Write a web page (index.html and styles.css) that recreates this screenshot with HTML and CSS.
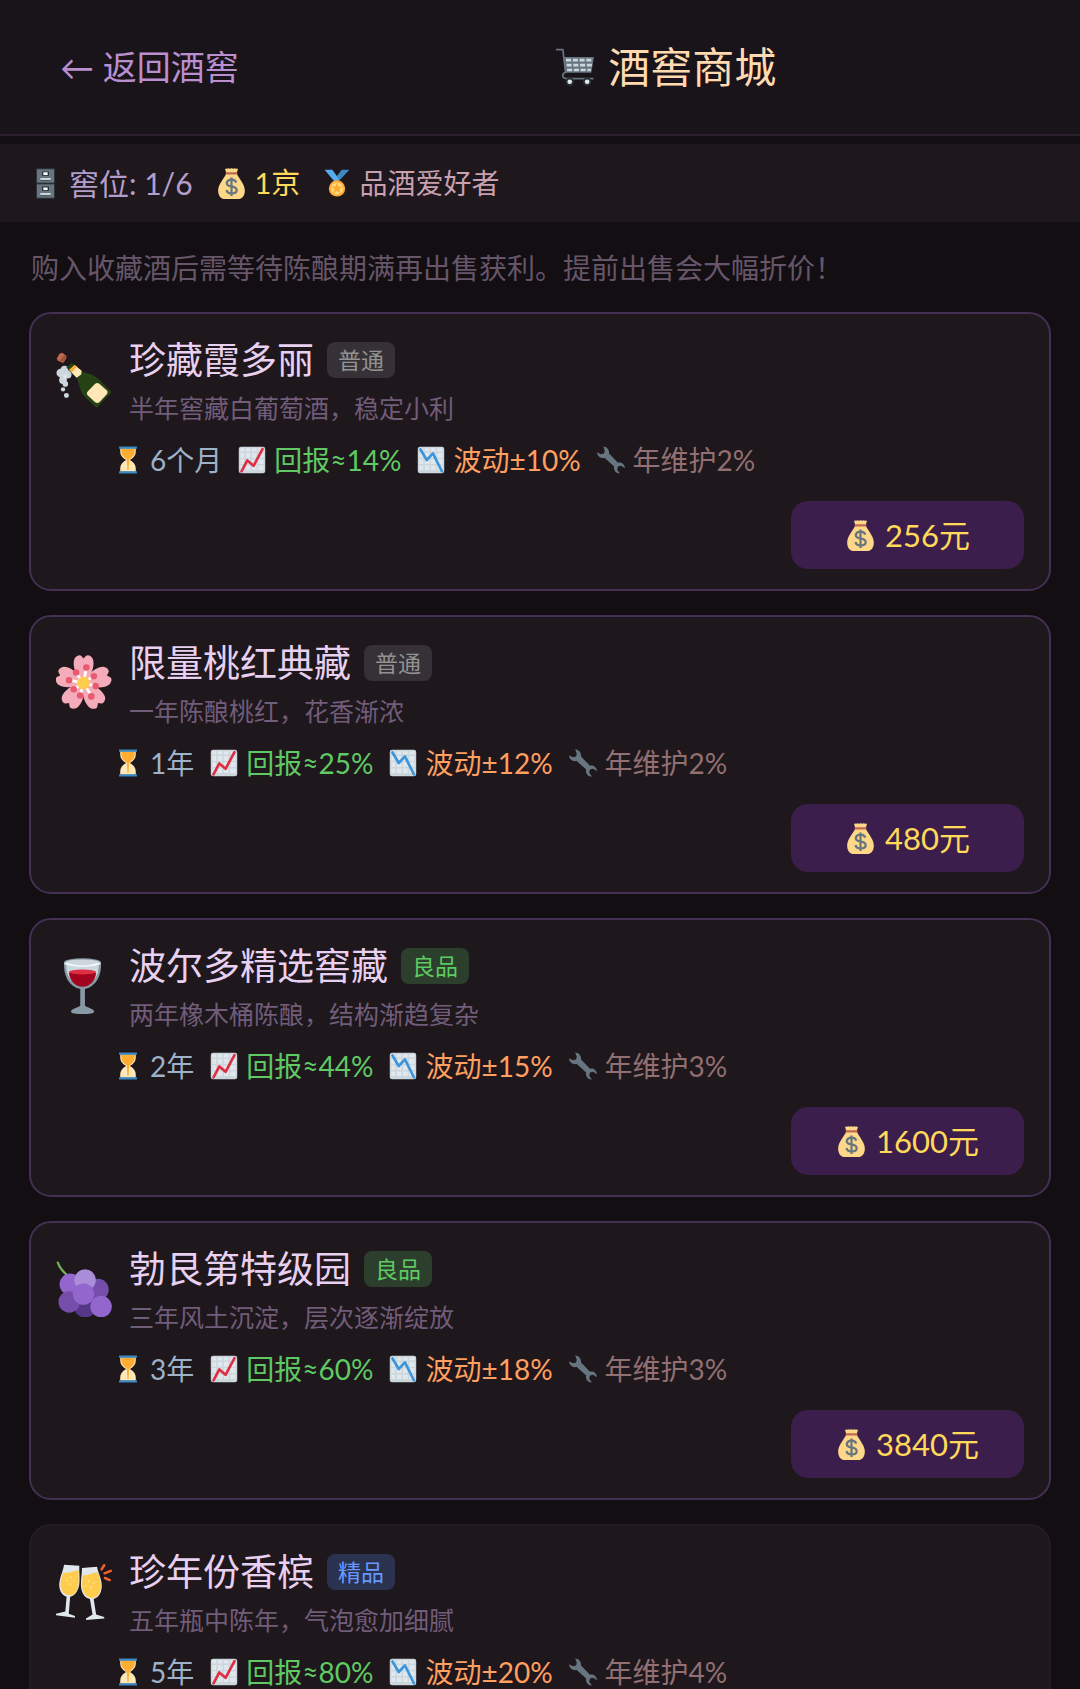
FILE: index.html
```html
<!DOCTYPE html>
<html lang="zh-CN">
  <head>
    <meta charset="UTF-8">
    <meta name="viewport" content="width=device-width, initial-scale=1">
    <title>酒窖商城</title>
    <link rel="stylesheet" href="styles.css">
  </head>
  <body>
    <!-- Shared icons -->
    <svg class="sprite" aria-hidden="true">
      <symbol id="cart" viewBox="0 0 36 36">
        <path d="M0 1.5h6.5L9 23q-4 2-2 5 .7 1 3 1h25.500" fill="none" stroke="#66757f" stroke-width="1.600"/>
        <path d="M7.500 8.500H36L33.500 23.500H9.500z" fill="#66757f"/>
        <path d="M9.500 11.500h25M10 16.200h24M10.500 20.800h22.500" stroke="#ccd6dd" stroke-width="2.500" stroke-dasharray="4.800 1.600"/>
        <circle cx="13" cy="32" r="4" fill="#292f33"/><circle cx="29.500" cy="32" r="4" fill="#292f33"/>
        <circle cx="13" cy="32" r="2.200" fill="#e1e8ed"/><circle cx="29.500" cy="32" r="2.200" fill="#e1e8ed"/>
      </symbol>
      <symbol id="cabinet" viewBox="0 0 36 36">
        <rect x="7" y="0" width="22" height="36" rx="1.500" fill="#292f33"/>
        <rect x="8" y="1.500" width="20" height="15.500" fill="#66757f"/>
        <rect x="8" y="19" width="20" height="15.500" fill="#66757f"/>
        <path d="M14 4h8v5h-8zM14 21.500h8v5h-8z" fill="#292f33"/>
        <path d="M15.500 5h5v3h-5zM15.500 22.500h5v3h-5z" fill="#fff"/>
        <path d="M12 11.500h12v3H12zM12 29h12v3H12z" fill="#ccd6dd"/>
        <path d="M12 14.500h12M12 32h12" stroke="#3b474f"/>
      </symbol>
      <symbol id="bag" viewBox="0 0 36 36">
        <path d="M12 6 10.500 1.200q1-1.200 2.500-.2 1.500-1.500 3 0 2-1.500 4 0 1.500-1.500 3 0 1.500-1 2.500.2L24 6c1.500 5 9.500 12 9.500 20 0 6-3 10-8 10h-15c-5 0-8-4-8-10 0-8 8-15 9.500-20z" fill="#fdd888"/>
        <path d="M11.500 5h13l.5 2.500H11z" fill="#bf6952"/>
        <path d="M23.500 17q-1-3.500-5.500-3.500t-5.500 3.800q0 3.200 5.500 4 6 1 6 4.500 0 3.700-5.800 3.700-5.200 0-6-4M18 11v21.500" fill="none" stroke="#67757f" stroke-width="2.600"/>
      </symbol>
      <symbol id="medal" viewBox="0 0 36 36">
        <path d="M34 1H24L14 14l4 4z" fill="#3b88c3"/>
        <path d="M2 1h10l8.500 12-5 4z" fill="#55acee"/>
        <circle cx="18" cy="25" r="10.500" fill="#ffac33"/>
        <circle cx="18" cy="25" r="7.800" fill="#ffd983"/>
        <path d="m18 17.500 2 5h5.500l-4.300 3.500 1.600 5.500-4.800-3.200-4.800 3.200 1.600-5.500-4.300-3.500H16z" fill="#ffac33"/>
      </symbol>
      <symbol id="hourglass" viewBox="0 0 36 36">
        <path d="M8 3h20v4c0 5-2.500 8-7.500 11 5 3 7.500 6 7.500 11v4H8v-4c0-5 2.500-8 7.500-11C10.500 15 8 12 8 7z" fill="#ffe8b6"/>
        <path d="M9.500 4h17v4c0 4-4 7-7 9.500L18.700 31h-1.400l-.8-13.500c-3-2.500-7-5.500-7-9.500z" fill="#ffac33"/>
        <path d="M6.500.5h23v3h-23zM6.500 32.500h23v3h-23z" fill="#3b88c3"/>
      </symbol>
      <symbol id="grid" viewBox="0 0 36 36">
        <rect x="1" y="1" width="34" height="34" rx="3" fill="#ccd6dd"/>
        <path d="M3 3h5v4H3zM10 3h6v4h-6zM18 3h6v4h-6zM26 3h7v4h-7zM3 9h5v6H3zM10 9h6v6h-6zM18 9h6v6h-6zM26 9h7v6h-7zM3 17h5v6H3zM10 17h6v6h-6zM18 17h6v6h-6zM26 17h7v6h-7zM3 25h5v6H3zM10 25h6v6h-6zM18 25h6v6h-6zM26 25h7v6h-7z" fill="#e1e8ed"/>
      </symbol>
      <symbol id="chart-up" viewBox="0 0 36 36">
        <use href="#grid"/>
        <path d="m4.500 32.500 7.500-14 8 7L31.500 4" fill="none" stroke="#dd2e44" stroke-width="3.400" stroke-linecap="round" stroke-linejoin="round"/>
      </symbol>
      <symbol id="chart-down" viewBox="0 0 36 36">
        <use href="#grid"/>
        <path d="m4.500 4.500 8 13.500 8-8.500 11.500 23" fill="none" stroke="#3a95dc" stroke-width="3.400" stroke-linecap="round" stroke-linejoin="round"/>
      </symbol>
      <symbol id="wrench" viewBox="0 0 36 36">
        <path d="M8 .5c4 0 8 3.500 7.500 9L27 21.500c4-1 8.500 1.500 9 7l-5-3-4 1-1 4 3.500 5c-5.500 0-8.500-4.500-7.500-9L10 15.500C4.500 16.500.5 13 0 8l5 2.500 4-1L10 6z" fill="#66757f"/>
      </symbol>
      <symbol id="champagne" viewBox="0 0 36 36">
        <path d="m.6 4 1.600-2.800L4 .5l2.800 2-.4 2-1.800 2.500L1 5.500z" fill="#c1694f"/>
        <path d="M2.500 5.500 5.500 2l1 1L5 6.500z" fill="#a0503a"/>
        <g fill="#ccd6dd">
          <circle cx="3" cy="13.500" r="2.700"/><circle cx="5.500" cy="11.500" r="2.700"/><circle cx="7.500" cy="14.500" r="2.500"/>
          <circle cx="4.500" cy="18" r="2.500"/><circle cx="6" cy="20.500" r="1.800"/><circle cx="4.500" cy="24" r="1.400"/><circle cx="6.700" cy="28" r="1.600"/>
        </g>
        <path d="M3 13q2 4 4.500 0L6 18z" fill="#e1e8ed"/>
        <path d="m6.700 10 3.500-3 2 1.300-.5 2 5 2.500c7 1 11 4.500 13 7l6 5.900L26.200 36l-7-6.500C15.500 26 15 21 13.500 16.500L9 12.500z" fill="#264316"/>
        <path d="m8.500 11.500 3.500-3.200 4.500 3.700-.3 2.500-3 2z" fill="#ffe8b6"/>
        <path d="m8.500 11.500 3.500-3.200 1.500 1.200-3.300 3.500z" fill="#ffac33"/>
        <path d="M25 20.600q1.500-1.300 3 0l4.500 4q1.300 1.300 0 2.800l-4.500 4.800q-1.500 1.300-3 0L20.500 28q-1.300-1.300 0-2.800z" fill="#ffe8b6"/>
      </symbol>
      <symbol id="flower" viewBox="0 0 36 36">
        <g fill="#f4abba">
          <path id="petal" d="M17.700 18C12 13 10.500 6 11.800 2.500 13 .3 15.500-.5 16.300.7l1.400 1.500L19.200.7c1-1.200 3.400-.4 4.500 1.800C25 6 23.500 13 17.700 18z"/>
          <use href="#petal" transform="rotate(72 17.700 18)"/>
          <use href="#petal" transform="rotate(144 17.700 18)"/>
          <use href="#petal" transform="rotate(216 17.700 18)"/>
          <use href="#petal" transform="rotate(288 17.700 18)"/>
        </g>
        <path d="m17.700 18 1.500-8M17.700 18l-4.500-6M17.700 18l-7.500-1.500M17.700 18l-5.500 3.500M17.700 18l-1.700 6.500M17.700 18l4.300 7M17.700 18l6 1.500M17.700 18l5.500-4" stroke="#fff" stroke-width="1.800"/>
        <g fill="#ea596e">
          <circle cx="19.500" cy="8" r="2.100"/><circle cx="12.900" cy="11.200" r="2.100"/><circle cx="8.400" cy="16.200" r="2.100"/><circle cx="11.400" cy="22" r="2.100"/>
          <circle cx="15.500" cy="26" r="2.100"/><circle cx="22.700" cy="26.600" r="2.100"/><circle cx="25.500" cy="20" r="2.100"/><circle cx="24.300" cy="13.600" r="2.100"/>
        </g>
        <circle cx="17.700" cy="18" r="4.100" fill="#ffcc4d"/>
      </symbol>
      <symbol id="wine" viewBox="0 0 36 36">
        <path d="M5.200 2.500h23.700C29.500 11 26 18 18.600 20v10.500c1 1.300 6 2 6 4 0 1-3.500 1.500-7.500 1.500s-7.500-.5-7.500-1.500c0-2 5-2.700 6-4V20C8 18 4.600 11 5.200 2.500z" fill="#8899a6"/>
        <path d="M6.500 4h21q0 12-10.500 14Q6.500 16 6.500 4z" fill="#ccd6dd"/>
        <path d="M8.300 9.500h17.500c-.5 5-3.800 9-8.700 9s-8.300-4-8.800-9z" fill="#a0041e"/>
        <ellipse cx="17" cy="9" rx="8.700" ry="1.600" fill="#dd2e44"/>
        <ellipse cx="17" cy="2.600" rx="11.900" ry="2.400" fill="#8899a6"/>
        <ellipse cx="17" cy="2.800" rx="10.800" ry="1.900" fill="#ccd6dd"/>
        <path d="M5.500 3.500q11.500 3.500 23 0" fill="none" stroke="#f5f8fa" stroke-width="1.200"/>
      </symbol>
      <symbol id="grapes" viewBox="0 0 36 36">
        <path d="M1 .5Q2 4.500 7 9" fill="none" stroke="#77b255" stroke-width="1.500"/>
        <circle cx="9.200" cy="15" r="6.900" fill="#9266cc"/>
        <circle cx="27" cy="18.300" r="6.900" fill="#744eaa"/>
        <circle cx="18.700" cy="29.500" r="6.900" fill="#553788"/>
        <circle cx="8.500" cy="26.300" r="6.900" fill="#744eaa"/>
        <circle cx="18.700" cy="12.200" r="6.900" fill="#aa8dd8"/>
        <circle cx="17.700" cy="21.300" r="6.900" fill="#9266cc"/>
        <circle cx="29" cy="29.300" r="6.900" fill="#9266cc"/>
      </symbol>
      <symbol id="cheers" viewBox="0 0 36 36">
        <path d="M5.200.5 15 1.200c-.2 3 .3 6 .1 10.500-.2 5-3 9-6 9.300L8.200 32l4 1.500v1L0 33v-1l6-1.500L6.800 21C3.500 20 1.500 16 2.200 11.500 3 7 4.700 4 5.200.5z" fill="#e1e8ed"/>
        <path d="m16.700 2.500 9.700-.7c.5 3.500 2.500 6.500 3 11.200.3 5-1.800 8.500-5.200 9.500l1.600 10 5.200 1.500v1L19.300 36v-1l4.200-2.500-1.700-10c-4-.7-5.800-5-5.800-9.500 0-4 .7-7 .7-10.500z" fill="#e1e8ed"/>
        <path d="M4.500 5.500q5 .5 7-1l3-.5v8c-.2 4.500-2.300 8-5.600 8.100C5 20 2.200 16.500 3 11.500z" fill="#ffcc4d"/>
        <path d="M17.200 7q2.500.5 5-.5t4.500-1.200c1 2.500 2 5 2.100 8 .2 4.500-1.700 8-5.300 8.500-4.500 0-6.700-4-6.700-8.800z" fill="#ffcc4d"/>
        <g fill="#ffe19a"><circle cx="9.500" cy="8.500" r=".7"/><circle cx="7" cy="10.500" r=".6"/><circle cx="11.500" cy="11" r=".6"/><circle cx="9" cy="13" r=".7"/><circle cx="21" cy="11" r=".7"/><circle cx="24.500" cy="12" r=".6"/><circle cx="19" cy="14" r=".6"/><circle cx="22.500" cy="15" r=".7"/></g>
        <path d="M29.300 3.500 31 .8M31.200 6l4-1.600M31.500 9l3 1.300" stroke="#f4622c" stroke-width="1.600" stroke-linecap="round"/>
      </symbol>
    </svg>

    <header class="topbar">
      <button class="back" type="button">← 返回酒窖</button>
      <h1 class="title"><svg class="icon-title"><use href="#cart"/></svg>酒窖商城</h1>
    </header>

    <div class="status">
      <span class="stat slots"><svg class="icon"><use href="#cabinet"/></svg>窖位: 1/6</span>
      <span class="stat money"><svg class="icon"><use href="#bag"/></svg>1京</span>
      <span class="stat rank"><svg class="icon-small"><use href="#medal"/></svg>品酒爱好者</span>
    </div>

    <main class="shop">
      <p class="hint">购入收藏酒后需等待陈酿期满再出售获利。提前出售会大幅折价！</p>

      <article class="card">
        <div class="card-head">
          <svg class="icon-wine"><use href="#champagne"/></svg>
          <div class="info">
            <h2 class="name">珍藏霞多丽 <span class="tag common">普通</span></h2>
            <p class="desc">半年窖藏白葡萄酒，稳定小利</p>
          </div>
        </div>
        <div class="meta">
          <span class="term"><svg class="icon-small"><use href="#hourglass"/></svg>6个月</span>
          <span class="gain"><svg class="icon-small"><use href="#chart-up"/></svg>回报≈14%</span>
          <span class="risk"><svg class="icon-small"><use href="#chart-down"/></svg>波动±10%</span>
          <span class="upkeep"><svg class="icon-small"><use href="#wrench"/></svg>年维护2%</span>
        </div>
        <button class="buy" type="button"><svg class="icon"><use href="#bag"/></svg>256元</button>
      </article>

      <article class="card">
        <div class="card-head">
          <svg class="icon-wine"><use href="#flower"/></svg>
          <div class="info">
            <h2 class="name">限量桃红典藏 <span class="tag common">普通</span></h2>
            <p class="desc">一年陈酿桃红，花香渐浓</p>
          </div>
        </div>
        <div class="meta">
          <span class="term"><svg class="icon-small"><use href="#hourglass"/></svg>1年</span>
          <span class="gain"><svg class="icon-small"><use href="#chart-up"/></svg>回报≈25%</span>
          <span class="risk"><svg class="icon-small"><use href="#chart-down"/></svg>波动±12%</span>
          <span class="upkeep"><svg class="icon-small"><use href="#wrench"/></svg>年维护2%</span>
        </div>
        <button class="buy" type="button"><svg class="icon"><use href="#bag"/></svg>480元</button>
      </article>

      <article class="card">
        <div class="card-head">
          <svg class="icon-wine"><use href="#wine"/></svg>
          <div class="info">
            <h2 class="name">波尔多精选窖藏 <span class="tag good">良品</span></h2>
            <p class="desc">两年橡木桶陈酿，结构渐趋复杂</p>
          </div>
        </div>
        <div class="meta">
          <span class="term"><svg class="icon-small"><use href="#hourglass"/></svg>2年</span>
          <span class="gain"><svg class="icon-small"><use href="#chart-up"/></svg>回报≈44%</span>
          <span class="risk"><svg class="icon-small"><use href="#chart-down"/></svg>波动±15%</span>
          <span class="upkeep"><svg class="icon-small"><use href="#wrench"/></svg>年维护3%</span>
        </div>
        <button class="buy" type="button"><svg class="icon"><use href="#bag"/></svg>1600元</button>
      </article>

      <article class="card">
        <div class="card-head">
          <svg class="icon-wine"><use href="#grapes"/></svg>
          <div class="info">
            <h2 class="name">勃艮第特级园 <span class="tag good">良品</span></h2>
            <p class="desc">三年风土沉淀，层次逐渐绽放</p>
          </div>
        </div>
        <div class="meta">
          <span class="term"><svg class="icon-small"><use href="#hourglass"/></svg>3年</span>
          <span class="gain"><svg class="icon-small"><use href="#chart-up"/></svg>回报≈60%</span>
          <span class="risk"><svg class="icon-small"><use href="#chart-down"/></svg>波动±18%</span>
          <span class="upkeep"><svg class="icon-small"><use href="#wrench"/></svg>年维护3%</span>
        </div>
        <button class="buy" type="button"><svg class="icon"><use href="#bag"/></svg>3840元</button>
      </article>

      <article class="card locked">
        <div class="card-head">
          <svg class="icon-wine"><use href="#cheers"/></svg>
          <div class="info">
            <h2 class="name">珍年份香槟 <span class="tag fine">精品</span></h2>
            <p class="desc">五年瓶中陈年，气泡愈加细腻</p>
          </div>
        </div>
        <div class="meta">
          <span class="term"><svg class="icon-small"><use href="#hourglass"/></svg>5年</span>
          <span class="gain"><svg class="icon-small"><use href="#chart-up"/></svg>回报≈80%</span>
          <span class="risk"><svg class="icon-small"><use href="#chart-down"/></svg>波动±20%</span>
          <span class="upkeep"><svg class="icon-small"><use href="#wrench"/></svg>年维护4%</span>
        </div>
      </article>
    </main>
  </body>
</html>
```

FILE: styles.css
```css
* {
  box-sizing: border-box;
}

body {
  display: flex;
  flex-direction: column;
  height: 100vh;
  margin: 0;
  background: #120e12;
  color: #e8d0f0;
  font-family: Lato, 'Noto Sans CJK SC', sans-serif;
  font-size: 28px;
  font-weight: 400;
}

h1, h2, p {
  margin: 0;
  font-weight: 400;
}

button {
  border: 0;
  font-family: inherit;
  cursor: pointer;
}

svg {
  flex: none;
}

.sprite {
  position: absolute;
  width: 0;
  height: 0;
}

.icon {
  width: 31px;
  height: 31px;
}

.icon-small {
  width: 28px;
  height: 28px;
}

.icon-title {
  width: 38px;
  height: 38px;
}

.icon-wine {
  width: 56px;
  height: 56px;
}

.topbar {
  display: flex;
  flex: none;
  align-items: center;
  gap: 10px;
  height: 136px;
  padding: 0 28px;
  background: #19141a;
  border-bottom: 2px solid #2b1f2e;
}

.back {
  padding: 16px 32px;
  background: none;
  color: #ba8fd0;
  font-size: 34px;
  line-height: 48px;
}

.title {
  display: flex;
  flex: 1;
  align-items: center;
  justify-content: center;
  gap: 14px;
  color: #ffdab0;
  font-size: 42px;
  line-height: 60px;
}

.status {
  display: flex;
  flex: none;
  align-items: center;
  gap: 23px;
  height: 78px;
  margin-top: 8px;
  padding: 0 30px;
  background: #1e171c;
}

.stat {
  display: flex;
  align-items: center;
  gap: 8px;
  line-height: 44px;
}

.slots {
  color: #b39dcb;
  font-size: 30px;
}

.money {
  color: #ffd95a;
  font-size: 29px;
}

.rank {
  color: #c9a0b0;
}

.shop {
  flex: 1;
  min-height: 0;
  padding: 26px 29px 0;
  overflow-y: auto;
  scrollbar-width: none;
}

.hint {
  margin-bottom: 24px;
  padding-left: 2px;
  color: #67566a;
  line-height: 40px;
}

.card {
  display: flex;
  flex-direction: column;
  margin-bottom: 24px;
  padding: 20px 25px;
  background: #1e171c;
  border: 2px solid #433052;
  border-radius: 22px;
}

.card.locked {
  border-color: #231c22;
}

.card-head {
  display: flex;
  align-items: center;
  gap: 17px;
}

.name {
  display: flex;
  align-items: center;
  gap: 13px;
  font-size: 37px;
  line-height: 52px;
}

.tag {
  padding: 0 11px;
  border-radius: 8px;
  font-size: 23px;
  line-height: 36px;
}

.common {
  background: #363136;
  color: #929292;
}

.good {
  background: #2c3f2d;
  color: #5fc963;
}

.fine {
  background: #2b3250;
  color: #6699ff;
}

.desc {
  margin-top: 5px;
  color: #715c7a;
  font-size: 25px;
  line-height: 34px;
}

.meta {
  display: flex;
  gap: 16px;
  margin-top: 17px;
  padding-left: 58px;
  line-height: 36px;
}

.meta span {
  display: flex;
  align-items: center;
  gap: 8px;
}

.term {
  color: #9db2c9;
}

.gain {
  color: #5fc963;
}

.risk {
  color: #ff9f60;
}

.upkeep {
  color: #916f72;
}

.buy {
  display: flex;
  align-items: center;
  align-self: flex-end;
  justify-content: center;
  gap: 9px;
  min-width: 233px;
  height: 68px;
  margin-top: 23px;
  background: #3c1e4d;
  border-radius: 17px;
  color: #ffd95a;
  font-size: 31px;
  line-height: 44px;
}
```
